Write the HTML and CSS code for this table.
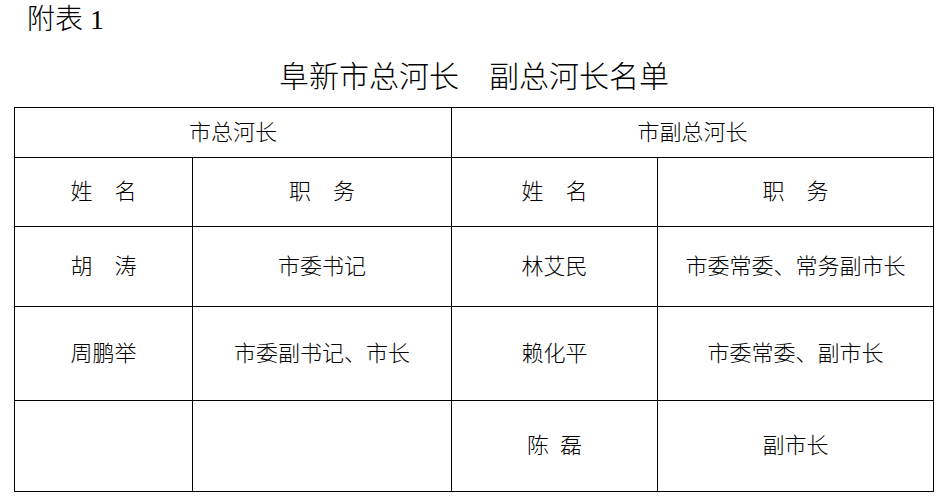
FILE: index.html
```html
<!DOCTYPE html>
<html lang="zh-CN">
<head>
<meta charset="utf-8">
<title>附表1 阜新市总河长 副总河长名单</title>
<link rel="stylesheet" href="styles.css">
</head>
<body>
<div class="page">
  <div class="label">附表 1</div>
  <h1 class="title">阜新市总河长　副总河长名单</h1>
  <div class="roster">
    <div class="cell head span2">市总河长</div>
    <div class="cell head span2">市副总河长</div>

    <div class="cell">姓　名</div>
    <div class="cell">职　务</div>
    <div class="cell">姓　名</div>
    <div class="cell">职　务</div>

    <div class="cell">胡　涛</div>
    <div class="cell">市委书记</div>
    <div class="cell">林艾民</div>
    <div class="cell">市委常委、常务副市长</div>

    <div class="cell">周鹏举</div>
    <div class="cell">市委副书记、市长</div>
    <div class="cell">赖化平</div>
    <div class="cell">市委常委、副市长</div>

    <div class="cell"></div>
    <div class="cell"></div>
    <div class="cell">陈&ensp;磊</div>
    <div class="cell">副市长</div>
  </div>
</div>
</body>
</html>
```

FILE: styles.css
```css
html, body {
  margin: 0;
  padding: 0;
  background: #fff;
}

body {
  font-family: "Liberation Serif", "Noto Sans CJK SC", serif;
  font-weight: 300;
  color: #000;
}

.page {
  width: 941px;
  height: 504px;
  overflow: hidden;
}

.label {
  padding-left: 27px;
  font-size: 28px;
  line-height: 40px;
  height: 40px;
}

.title {
  margin: 16px 0 9px 14px;
  width: 920px;
  text-align: center;
  font-size: 30px;
  font-weight: 300;
  line-height: 42px;
  height: 42px;
}

.roster {
  display: grid;
  grid-template-columns: 177px 258px 205px 275px;
  grid-template-rows: 49px 68px 79px 93px 90px;
  gap: 1px;
  background: #000;
  border: 1px solid #000;
  width: max-content;
  margin-left: 14px;
}

.cell {
  background: #fff;
  display: flex;
  align-items: center;
  justify-content: center;
  font-size: 22px;
  line-height: 1;
  white-space: pre;
}

.span2 {
  grid-column: span 2;
}
```
